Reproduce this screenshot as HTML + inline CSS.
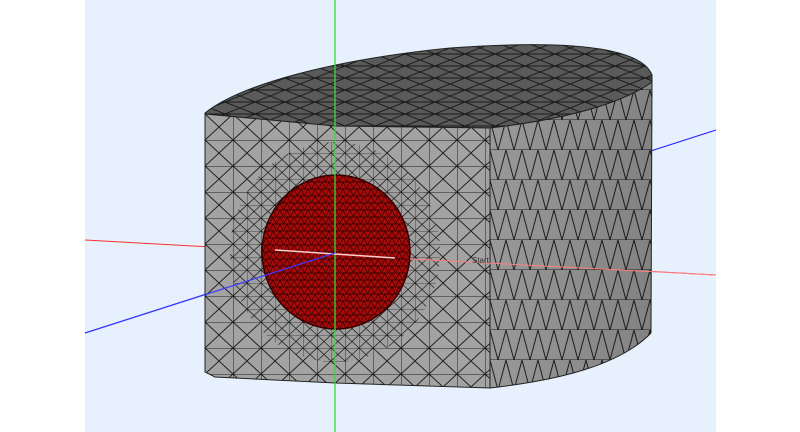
<!DOCTYPE html>
<html><head><meta charset="utf-8"><style>
html,body{margin:0;padding:0;width:800px;height:432px;overflow:hidden;background:#fff}
</style></head><body>
<svg width="800" height="432" viewBox="0 0 800 432" xmlns="http://www.w3.org/2000/svg">
<defs>
<pattern id="mf" width="28" height="26" patternUnits="userSpaceOnUse" x="205" y="114">
<rect width="28" height="26" fill="#a3a3a3"/>
<path d="M0 0H28M0 0V26M0 0L14 13L28 0M0 26L14 13L28 26" stroke="#1e1e1e" stroke-width="1" fill="none"/>
</pattern>
<pattern id="mf2" width="14" height="13" patternUnits="userSpaceOnUse" x="205" y="114">
<rect width="14" height="13" fill="#a0a0a0"/>
<path d="M0 0H14M0 0V13M0 0L14 13M14 0L0 13" stroke="#1e1e1e" stroke-width="0.8" fill="none"/>
</pattern>
<pattern id="ms" width="16" height="30" patternUnits="userSpaceOnUse" x="490" y="90">
<rect width="16" height="30" fill="#999"/>
<path d="M0 0L8 30L16 0M0 30H16" stroke="#1e1e1e" stroke-width="1" fill="none"/>
</pattern>
<linearGradient id="sg" x1="0" x2="1" y1="0" y2="0">
<stop offset="0" stop-color="#000" stop-opacity="0"/>
<stop offset="1" stop-color="#000" stop-opacity="0.15"/>
</linearGradient>
<pattern id="mt" width="30" height="12" patternUnits="userSpaceOnUse">
<rect width="30" height="12" fill="#5a5a5a"/>
<path d="M0 0L15 6L30 0M0 12L15 6L30 12M0 6H30" stroke="#1a1a1a" stroke-width="1" fill="none"/>
</pattern>
<pattern id="mr" width="7" height="7" patternUnits="userSpaceOnUse">
<rect width="7" height="7" fill="#a80a0a"/>
<path d="M0 0H7M0 0L3.5 7L7 0M0 7H7" stroke="#2a0000" stroke-width="0.7" fill="none"/>
</pattern>
</defs>
<rect x="85" y="0" width="631" height="432" fill="#e6f1fd"/>
<line x1="85" y1="333" x2="716" y2="130" stroke="#2020ff" stroke-width="1"/>
<line x1="85" y1="240" x2="716" y2="275" stroke="#ff3030" stroke-width="1"/>
<path d="M205 113 C240 85 330 60 450 48 C560 40 640 45 652 75 L652 82 C620 105 560 120 490 128 L335 126 L205 114 Z" fill="url(#mt)" stroke="#222"/>
<path d="M490 128 C560 120 620 105 652 82 L651 333 C620 365 560 380 490 388 Z" fill="url(#ms)" stroke="#222"/>
<path d="M490 128 C560 120 620 105 652 82 L651 333 C620 365 560 380 490 388 Z" fill="url(#sg)"/>
<path d="M205 114 L335 126 L490 128 L490 388 L335 383 L215 377 L205 372 Z" fill="url(#mf)" stroke="#222"/>
<ellipse cx="335" cy="252" rx="105" ry="110" fill="url(#mf2)" opacity="0.9"/>
<ellipse cx="336" cy="252" rx="74" ry="77" fill="url(#mr)" stroke="#300" stroke-width="1.5"/>
<line x1="335" y1="0" x2="335" y2="432" stroke="#33dd33" stroke-width="1.3"/>
<line x1="275" y1="250" x2="395" y2="258" stroke="#ffd0d0" stroke-width="1.5"/>
<line x1="410" y1="259" x2="716" y2="275" stroke="#ff8080" stroke-width="1"/>
<line x1="85" y1="333" x2="335" y2="253" stroke="#3a3aff" stroke-width="1.2"/>
<text x="472" y="263" font-family="Liberation Sans, sans-serif" font-size="8" fill="#333">Start</text>
</svg>
</body></html>
